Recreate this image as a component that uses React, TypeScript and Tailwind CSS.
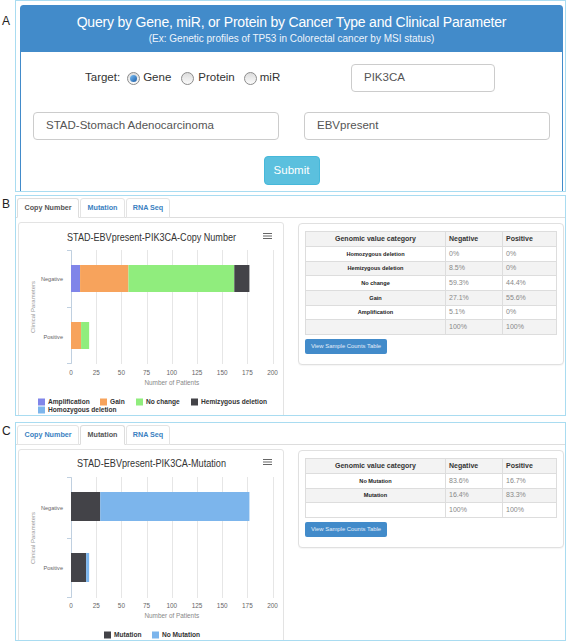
import React from 'react';

type Seg = { v: number; color: string };
type Bar = { label: string; y: number; h: number; labelY: number; segs: Seg[] };
type Leg = { label: string; color: string; x: number; y: number };

const COLORS = {
  amp: '#8085e9',
  gain: '#f7a35c',
  none: '#90ed7d',
  dark: '#434348',
  blue: '#7cb5ec',
};

const TICKS = [0, 25, 50, 75, 100, 125, 150, 175, 200];

function Chart({
  title,
  titleLen,
  height,
  titleY,
  axisTop,
  axisBottom,
  bars,
  tickY,
  axisTitleY,
  legend,
}: {
  title: string;
  titleLen: number;
  height: number;
  titleY: number;
  axisTop: number;
  axisBottom: number;
  bars: Bar[];
  tickY: number;
  axisTitleY: number;
  legend: Leg[];
}) {
  const x0 = 52;
  const k = 1.008;
  const mid = Math.round((axisTop + axisBottom) / 2);
  return (
    <svg width={264} height={height} className="block">
      <text
        x={132.5}
        y={titleY}
        textAnchor="middle"
        fontSize={10.5}
        fontFamily="'Liberation Sans', Arial, sans-serif"
        fill="#333"
        textLength={titleLen}
        lengthAdjust="spacingAndGlyphs"
      >
        {title}
      </text>
      {/* export menu */}
      <g stroke="#666" strokeWidth={1}>
        <line x1={244} x2={253} y1={titleY - 7.5} y2={titleY - 7.5} />
        <line x1={244} x2={253} y1={titleY - 5} y2={titleY - 5} />
        <line x1={244} x2={253} y1={titleY - 2.5} y2={titleY - 2.5} />
      </g>

      {TICKS.map((t) => {
        const x = Math.round(x0 + t * k) + 0.5;
        return <line key={t} x1={x} x2={x} y1={axisTop} y2={axisBottom} stroke="#e6e6e6" />;
      })}
      <path
        d={`M${x0 - 4} ${axisTop + 0.5}H${x0 + 0.5}V${axisBottom - 0.5}H${x0 - 4}M${x0 - 4} ${mid + 0.5}H${x0 + 0.5}`}
        stroke="#c0d0e0"
        fill="none"
      />

      {bars.map((b) => {
        let acc = 0;
        return (
          <g key={b.label}>
            {b.segs.map((s, i) => {
              const x = x0 + acc * k;
              acc += s.v;
              return <rect key={i} x={x} y={b.y} width={s.v * k} height={b.h} fill={s.color} />;
            })}
            <text
              x={x0 - 8}
              y={b.labelY + 2}
              textAnchor="end"
              fontSize={5.6}
              fontFamily="'Liberation Sans', Arial, sans-serif"
              fill="#666"
            >
              {b.label}
            </text>
          </g>
        );
      })}

      <text
        transform={`translate(16 ${mid}) rotate(-90)`}
        textAnchor="middle"
        fontSize={6}
        fontFamily="'Liberation Sans', Arial, sans-serif"
        fill="#999"
      >
        Clinical Parameters
      </text>

      {TICKS.map((t) => (
        <text
          key={t}
          x={x0 + t * k}
          y={tickY}
          textAnchor="middle"
          fontSize={6.4}
          fontFamily="'Liberation Sans', Arial, sans-serif"
          fill="#666"
        >
          {t}
        </text>
      ))}
      <text
        x={x0 + 100 * k}
        y={axisTitleY}
        textAnchor="middle"
        fontSize={6.4}
        fontFamily="'Liberation Sans', Arial, sans-serif"
        fill="#888"
      >
        Number of Patients
      </text>

      {legend.map((l) => (
        <g key={l.label}>
          <rect x={l.x} y={l.y - 3.5} width={7} height={7} fill={l.color} />
          <text
            x={l.x + 10}
            y={l.y + 2.3}
            fontSize={6.6}
            fontWeight="bold"
            fontFamily="'Liberation Sans', Arial, sans-serif"
            fill="#333"
          >
            {l.label}
          </text>
        </g>
      ))}
    </svg>
  );
}

function Radio({ checked }: { checked?: boolean }) {
  return (
    <span className="flex h-[13px] w-[13px] flex-none items-center justify-center rounded-full border border-[#8c8c8c] bg-linear-to-b from-[#dcdcdc] to-[#fbfbfb]">
      {checked && <span className="h-[7px] w-[7px] rounded-full bg-linear-to-br from-[#7cc0f5] to-[#1a5da6]" />}
    </span>
  );
}

function Field({ value, className = '' }: { value: string; className?: string }) {
  return (
    <div
      className={`flex h-[28px] items-center rounded-[4px] border border-[#cccccc] bg-white pl-[12px] text-[11.5px] text-[#555] ${className}`}
    >
      {value}
    </div>
  );
}

function Tabs({ active }: { active: number }) {
  const tabs = [
    { label: 'Copy Number', w: 'w-[62px]' },
    { label: 'Mutation', w: 'w-[45px]' },
    { label: 'RNA Seq', w: 'w-[44px]' },
  ];
  return (
    <div className="flex gap-[1px] border-b border-[#dddddd] pl-[1px]">
      {tabs.map((t, i) => (
        <div
          key={t.label}
          className={`-mb-px flex h-[20px] items-center justify-center rounded-t-[3px] border text-[7.2px] font-bold ${t.w} ${
            i === active
              ? 'border-[#dddddd] border-b-white bg-white text-[#555]'
              : 'border-[#e4e4e4] bg-white text-[#3a7fc1]'
          }`}
        >
          {t.label}
        </div>
      ))}
    </div>
  );
}

function ResultTable({ rows }: { rows: [string, string, string][] }) {
  return (
    <div className="ml-[14px] mt-[5px] w-[266px] rounded-[4px] border border-[#e0e0e0] bg-white px-[6px] pb-[10px] pt-[7px] shadow-[0_1px_1px_rgba(0,0,0,0.04)]">
      <table className="w-[251px] table-fixed border-collapse text-[7px]">
        <colgroup>
          <col className="w-[140px]" />
          <col className="w-[57px]" />
          <col className="w-[54px]" />
        </colgroup>
        <thead>
          <tr className="h-[15px] bg-[#f3f3f3]">
            <th className="border border-[#dddddd] p-0 text-center font-bold text-[#333]">Genomic value category</th>
            <th className="border border-[#dddddd] p-0 pl-[3px] text-left font-bold text-[#333]">Negative</th>
            <th className="border border-[#dddddd] p-0 pl-[3px] text-left font-bold text-[#333]">Positive</th>
          </tr>
        </thead>
        <tbody>
          {rows.map((r, i) => (
            <tr key={i} className={`h-[14.7px] ${i % 2 === 1 ? 'bg-[#f3f3f3]' : 'bg-white'}`}>
              <td className="border border-[#dddddd] p-0 text-center text-[5.6px] font-bold text-[#222]">{r[0]}</td>
              <td className="border border-[#dddddd] p-0 pl-[3px] text-[#888]">{r[1]}</td>
              <td className="border border-[#dddddd] p-0 pl-[3px] text-[#888]">{r[2]}</td>
            </tr>
          ))}
        </tbody>
      </table>
      <div className="mt-[4px] flex h-[15px] w-[82px] items-center justify-center rounded-[2px] bg-[#428bca] text-[5.9px] text-[#e3edf8]">
        View Sample Counts Table
      </div>
    </div>
  );
}

export default function App() {
  return (
    <div className="flex h-[642px] w-[567px] flex-col overflow-hidden bg-white font-['Liberation_Sans',Arial,sans-serif] text-[#333]">
      {/* A: query form */}
      <div className="flex h-[192px]">
        <div className="w-[15px] pl-[2px] pt-[15px] text-[12px] leading-[12px] text-[#222]">A</div>
        <div className="w-[551px] overflow-hidden border border-[#a9dcf1] pl-[4px] pr-[2px] pt-[4px]">
          <div className="h-[200px] rounded-t-[3px] border border-[#428bca] bg-white">
            <div className="h-[46px] bg-[#428bca] pt-[8px] text-center text-white">
              <p className="text-[14px] leading-[17px] tracking-[-0.2px]">
                Query by Gene, miR, or Protein by Cancer Type and Clinical Parameter
              </p>
              <p className="mt-[1px] text-[10px] leading-[13px] text-[#eef4fb]">
                (Ex: Genetic profiles of TP53 in Colorectal cancer by MSI status)
              </p>
            </div>
            <div className="px-[12px] pt-[12px]">
              <div className="grid grid-cols-2 gap-x-[25px] gap-y-[20px]">
                <div className="flex h-[28px] items-center pl-[52px] text-[11.5px] text-[#333]">
                  <span className="mr-[7px]">Target:</span>
                  <Radio checked />
                  <span className="ml-[3px] mr-[10px]">Gene</span>
                  <Radio />
                  <span className="ml-[4px] mr-[9px]">Protein</span>
                  <Radio />
                  <span className="ml-[3px]">miR</span>
                </div>
                <div className="pl-[47px]">
                  <Field value="PIK3CA" className="w-[144px]" />
                </div>
                <Field value="STAD-Stomach Adenocarcinoma" />
                <Field value="EBVpresent" />
              </div>
              <div className="mt-[16px] flex justify-center">
                <div className="flex h-[29px] w-[56px] items-center justify-center rounded-[4px] border border-[#46b8da] bg-[#5bc0de] text-[11.5px] text-white">
                  Submit
                </div>
              </div>
            </div>
          </div>
        </div>
      </div>

      {/* B: copy number */}
      <div className="mt-[3px] flex h-[221px]">
        <div className="w-[15px] pl-[2px] pt-[3px] text-[12px] leading-[12px] text-[#222]">B</div>
        <div className="w-[551px] overflow-hidden border border-[#a9dcf1] pt-[2px]">
          <Tabs active={0} />
          <div className="flex items-start">
            <div className="ml-[2px] mt-[4px] h-[200px] w-[266px] rounded-[3px] border border-[#e3e3e3]">
              <Chart
                title="STAD-EBVpresent-PIK3CA-Copy Number"
                titleLen={169}
                height={196}
                titleY={18}
                axisTop={27}
                axisBottom={141}
                tickY={152}
                axisTitleY={161.5}
                bars={[
                  {
                    label: 'Negative',
                    y: 42,
                    h: 27,
                    labelY: 56,
                    segs: [
                      { v: 9, color: COLORS.amp },
                      { v: 48, color: COLORS.gain },
                      { v: 105, color: COLORS.none },
                      { v: 15, color: COLORS.dark },
                    ],
                  },
                  {
                    label: 'Positive',
                    y: 99,
                    h: 27,
                    labelY: 114,
                    segs: [
                      { v: 10, color: COLORS.gain },
                      { v: 8, color: COLORS.none },
                    ],
                  },
                ]}
                legend={[
                  { label: 'Amplification', color: COLORS.amp, x: 19, y: 179 },
                  { label: 'Gain', color: COLORS.gain, x: 81, y: 179 },
                  { label: 'No change', color: COLORS.none, x: 117, y: 179 },
                  { label: 'Hemizygous deletion', color: COLORS.dark, x: 172, y: 179 },
                  { label: 'Homozygous deletion', color: COLORS.blue, x: 19, y: 187 },
                ]}
              />
            </div>
            <ResultTable
              rows={[
                ['Homozygous deletion', '0%', '0%'],
                ['Hemizygous deletion', '8.5%', '0%'],
                ['No change', '59.3%', '44.4%'],
                ['Gain', '27.1%', '55.6%'],
                ['Amplification', '5.1%', '0%'],
                ['', '100%', '100%'],
              ]}
            />
          </div>
        </div>
      </div>

      {/* C: mutation */}
      <div className="mt-[6px] flex h-[219px]">
        <div className="w-[15px] pl-[2px] pt-[3px] text-[12px] leading-[12px] text-[#222]">C</div>
        <div className="w-[551px] overflow-hidden border border-[#a9dcf1] pt-[2px]">
          <Tabs active={1} />
          <div className="flex items-start">
            <div className="ml-[2px] mt-[4px] h-[200px] w-[266px] rounded-[3px] border border-[#e3e3e3]">
              <Chart
                title="STAD-EBVpresent-PIK3CA-Mutation"
                titleLen={149}
                height={196}
                titleY={17}
                axisTop={27}
                axisBottom={148}
                tickY={158}
                axisTitleY={167.5}
                bars={[
                  {
                    label: 'Negative',
                    y: 42,
                    h: 29,
                    labelY: 58,
                    segs: [
                      { v: 29, color: COLORS.dark },
                      { v: 148, color: COLORS.blue },
                    ],
                  },
                  {
                    label: 'Positive',
                    y: 103,
                    h: 29,
                    labelY: 118,
                    segs: [
                      { v: 15, color: COLORS.dark },
                      { v: 3, color: COLORS.blue },
                    ],
                  },
                ]}
                legend={[
                  { label: 'Mutation', color: COLORS.dark, x: 85, y: 185 },
                  { label: 'No Mutation', color: COLORS.blue, x: 133, y: 185 },
                ]}
              />
            </div>
            <ResultTable
              rows={[
                ['No Mutation', '83.6%', '16.7%'],
                ['Mutation', '16.4%', '83.3%'],
                ['', '100%', '100%'],
              ]}
            />
          </div>
        </div>
      </div>
    </div>
  );
}
